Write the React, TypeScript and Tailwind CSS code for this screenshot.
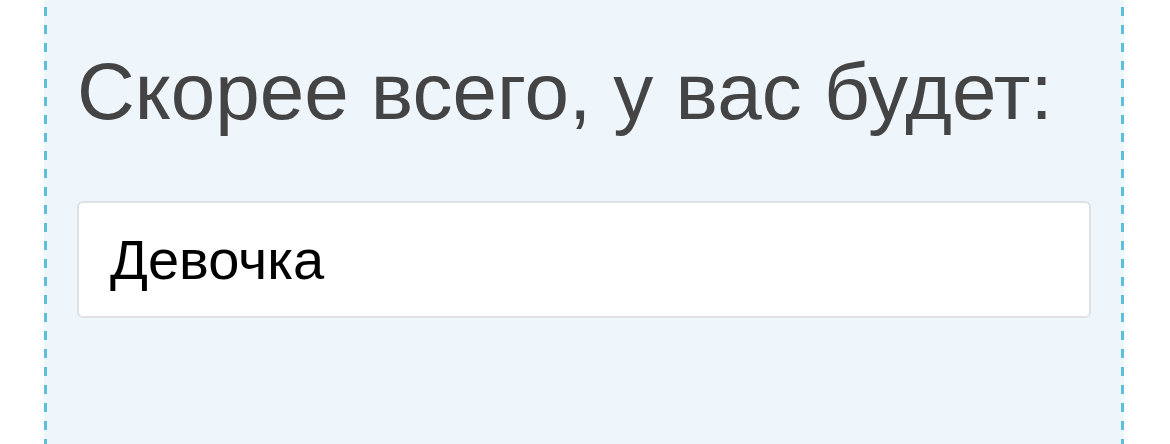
// dashed edge drawn as a repeating stripe: 9px dash, 9px gap
const edge =
  "w-[3px] shrink-0 bg-[repeating-linear-gradient(to_bottom,transparent_0_7px,#5bc0de_7px_16px,transparent_16px_18px)]";

export default function App() {
  return (
    <div className="h-[444px] overflow-hidden bg-white font-['Liberation_Sans',Arial,sans-serif]">
      <div className="ml-[44px] w-[1080px] h-full flex bg-[#eef6fc]">
        <div className={edge} />
        <div className="flex-1 px-[30px] pt-[52px]">
          <h2 className="text-[80px] leading-[80px] text-[#444444] font-normal">
            Скорее всего, у вас будет:
          </h2>
          <div className="mt-[69px] h-[117px] rounded-[6px] border-2 border-[#dfe1e3] bg-white pl-[31px] flex items-center">
            <span className="text-[56px] leading-none text-black">Девочка</span>
          </div>
        </div>
        <div className={edge} />
      </div>
    </div>
  );
}
